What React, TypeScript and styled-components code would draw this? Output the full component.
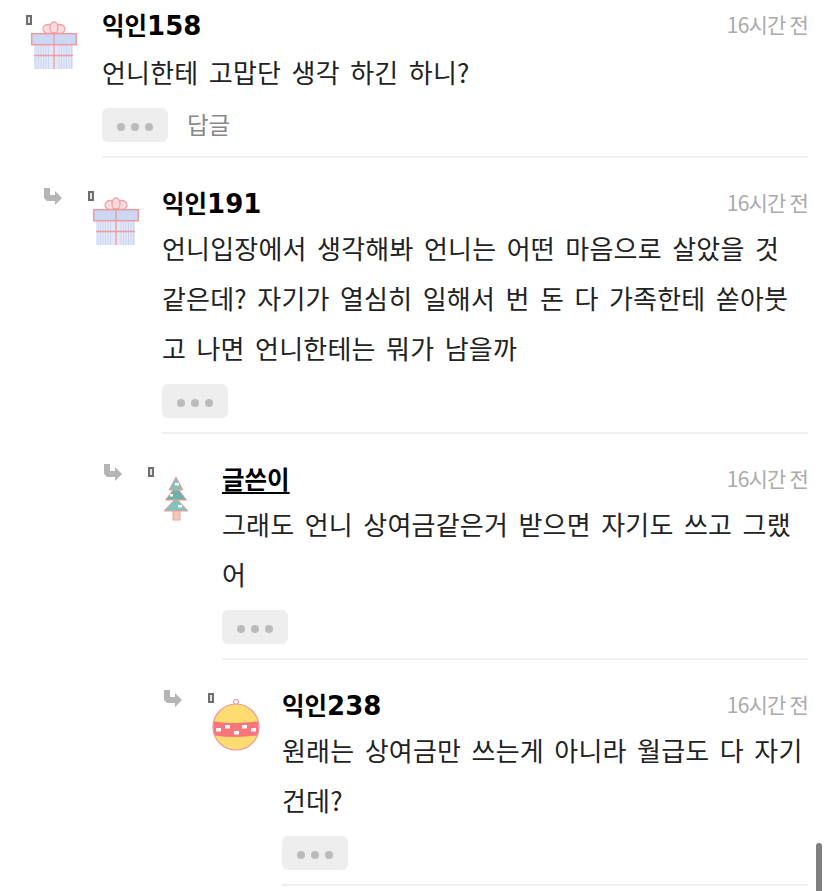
import React from 'react';
import styled, { createGlobalStyle } from 'styled-components';

const GlobalStyle = createGlobalStyle`
  html, body {
    margin: 0;
    padding: 0;
    background: #fff;
    overflow: hidden;
  }
  body {
    font-family: "Noto Sans CJK KR", sans-serif;
  }
`;

const Page = styled.div`
  width: 828px;
  height: 891px;
  overflow: hidden;
  position: relative;
  padding-top: 6px;
  box-sizing: border-box;
`;

const ScrollThumb = styled.div`
  position: absolute;
  right: 6px;
  top: 843px;
  width: 6px;
  height: 48px;
  background: #808080;
  border-radius: 3px 3px 0 0;
`;

const CommentRow = styled.div<{ $level: number }>`
  display: flex;
  margin-left: ${(p) => p.$level * 60}px;
  margin-right: 20px;
  padding-top: ${(p) => (p.$level === 0 ? 0 : 26)}px;
`;

const Gutter = styled.div`
  flex: 0 0 102px;
  position: relative;
`;

const ReplyArrow = styled.svg`
  position: absolute;
  left: -16px;
  top: 4px;
`;

const BrokenMark = styled.div<{ $level: number }>`
  position: absolute;
  left: ${(p) => (p.$level === 0 ? 26 : 28)}px;
  top: ${(p) => (p.$level === 0 ? 9 : 7)}px;
  width: 6px;
  height: 10px;
  box-sizing: border-box;
  border: 2px solid #6e6e6e;
  background: #e4e4e4;
`;

const AvatarSlot = styled.div<{ $level: number }>`
  position: absolute;
  left: ${(p) => (p.$level === 0 ? 28 : 30)}px;
  top: ${(p) => (p.$level === 0 ? 15 : 13)}px;
  width: 52px;
  height: 52px;
`;

const Body = styled.div`
  flex: 1;
  min-width: 0;
`;

const Meta = styled.div<{ $level: number }>`
  display: flex;
  justify-content: space-between;
  align-items: center;
  height: 36px;
  margin-bottom: ${(p) => (p.$level === 0 ? 5 : 3)}px;
`;

const Name = styled.span<{ $writer?: boolean }>`
  font-family: "Noto Sans CJK KR", sans-serif;
  font-size: 24.5px;
  font-weight: 700;
  color: #000;
  margin-top: 1px;
  text-decoration: ${(p) => (p.$writer ? 'underline' : 'none')};
  text-underline-offset: 3px;
`;

const NameNumber = styled.span`
  font-family: "DejaVu Sans", sans-serif;
  font-size: 26px;
`;

const Time = styled.span`
  font-size: 21px;
  letter-spacing: -0.8px;
  color: #aaa;
`;

const Text = styled.div`
  font-size: 26px;
  line-height: 50px;
  letter-spacing: 0.2px;
  word-spacing: 4.35px;
  color: #222;
  word-break: break-all;
`;

const Actions = styled.div`
  display: flex;
  align-items: center;
  gap: 19px;
  margin-top: 11px;
  padding-bottom: 14px;
  border-bottom: 2px solid #f0f0f0;
`;

const MoreButton = styled.div`
  width: 66px;
  height: 34px;
  padding-top: 3px;
  box-sizing: border-box;
  border-radius: 6px;
  background: #eee;
  display: flex;
  align-items: center;
  justify-content: center;
  gap: 6px;
`;

const Dot = styled.span`
  width: 8px;
  height: 8px;
  border-radius: 50%;
  background: #bbb;
`;

const ReplyLink = styled.span`
  font-size: 23.5px;
  line-height: 32px;
  color: #888;
  margin-bottom: 2px;
`;

const GiftAvatar = () => (
  <svg width="52" height="52" viewBox="0 0 52 52">
    <g stroke="#f2a0a4" strokeWidth="1.3" fill="#fbdcdc">
      <ellipse cx="20.5" cy="8" rx="5.5" ry="4.5" />
      <ellipse cx="31.5" cy="8" rx="5.5" ry="4.5" />
      <ellipse cx="26" cy="6.5" rx="4" ry="5.5" />
    </g>
    <rect x="6" y="24" width="39" height="24" fill="#e3e8f8" />
    <path d="M8 24V48M10.5 24V48M13 24V48M15.500 24V48M18 24V48M20.500 24V48M31 24V48M33.500 24V48M36 24V48M38.500 24V48M41 24V48M43.500 24V48" stroke="#ccd5f0" strokeWidth="1" />
    <rect x="3.7" y="12.7" width="44.6" height="11" fill="#ccd7f3" stroke="#f09a9e" strokeWidth="1.5" />
    <path d="M26 12.700V48M6 34.500H45" stroke="#f09a9e" strokeWidth="1.3" />
  </svg>
);

const TreeAvatar = () => (
  <svg width="52" height="52" viewBox="0 0 52 52">
    <rect x="23" y="37" width="7" height="10" fill="#f4c8b8" stroke="#f2a0a4" strokeWidth="1" />
    <path d="M26 25L38 38H14Z" fill="#7fc4bb" stroke="#f09a9e" strokeWidth="1" strokeLinejoin="round" />
    <path d="M26 13L36.500 27H15.500Z" fill="#6fb0a8" stroke="#f09a9e" strokeWidth="1" strokeLinejoin="round" />
    <path d="M26 4L33 17H19Z" fill="#7fc4bb" stroke="#f09a9e" strokeWidth="1" strokeLinejoin="round" />
    <rect x="25" y="10" width="4" height="2.500" fill="#fff" />
    <rect x="20" y="21" width="3" height="2.500" fill="#fff" />
    <rect x="28" y="32" width="4" height="2.500" fill="#fff" />
  </svg>
);

const BallAvatar = () => (
  <svg width="52" height="52" viewBox="0 0 52 52">
    <defs>
      <clipPath id="ball-clip">
        <circle cx="26" cy="28" r="23" />
      </clipPath>
    </defs>
    <circle cx="26" cy="3" r="2.500" fill="#fff" stroke="#f09a9e" strokeWidth="1.2" />
    <circle cx="26" cy="28" r="23" fill="#fddc72" />
    <path d="M2 22Q26 26 50 22V36Q26 40 2 36Z" fill="#f8767a" clipPath="url(#ball-clip)" />
    <circle cx="26" cy="28" r="23" fill="none" stroke="#f09a9e" strokeWidth="1.2" />
    <g fill="#fff">
      <rect x="6" y="29" width="5" height="3.500" />
      <rect x="15" y="26" width="5" height="3.500" />
      <rect x="24" y="32" width="5" height="3.500" />
      <rect x="32" y="26" width="5" height="3.500" />
      <rect x="41" y="29" width="5" height="3.500" />
    </g>
  </svg>
);

const Arrow = () => (
  <ReplyArrow width="18" height="17" viewBox="0 0 18 17">
    <path d="M0 0H6V7H11V3L18 10L11 17V13H3L0 10Z" fill="#b5b5b5" />
  </ReplyArrow>
);

interface CommentData {
  name: string;
  number?: string;
  text: string;
  level: number;
  writer?: boolean;
  reply?: boolean;
  avatar: React.ReactNode;
}

const comments: CommentData[] = [
  { name: '익인', number: '158', text: '언니한테 고맙단 생각 하긴 하니?', level: 0, reply: true, avatar: <GiftAvatar /> },
  {
    name: '익인',
    number: '191',
    text: '언니입장에서 생각해봐 언니는 어떤 마음으로 살았을 것 같은데? 자기가 열심히 일해서 번 돈 다 가족한테 쏟아붓고 나면 언니한테는 뭐가 남을까',
    level: 1,
    avatar: <GiftAvatar />,
  },
  { name: '글쓴이', text: '그래도 언니 상여금같은거 받으면 자기도 쓰고 그랬어', level: 2, writer: true, avatar: <TreeAvatar /> },
  { name: '익인', number: '238', text: '원래는 상여금만 쓰는게 아니라 월급도 다 자기건데?', level: 3, avatar: <BallAvatar /> },
];

export default function App() {
  return (
    <Page>
      <GlobalStyle />
      {comments.map((c) => (
        <CommentRow key={c.level} $level={c.level}>
          <Gutter>
            {c.level > 0 && <Arrow />}
            <BrokenMark $level={c.level} />
            <AvatarSlot $level={c.level}>{c.avatar}</AvatarSlot>
          </Gutter>
          <Body>
            <Meta $level={c.level}>
              <Name $writer={c.writer}>
                {c.name}
                {c.number && <NameNumber>{c.number}</NameNumber>}
              </Name>
              <Time>16시간 전</Time>
            </Meta>
            <Text>{c.text}</Text>
            <Actions>
              <MoreButton>
                <Dot />
                <Dot />
                <Dot />
              </MoreButton>
              {c.reply && <ReplyLink>답글</ReplyLink>}
            </Actions>
          </Body>
        </CommentRow>
      ))}
      <ScrollThumb />
    </Page>
  );
}
